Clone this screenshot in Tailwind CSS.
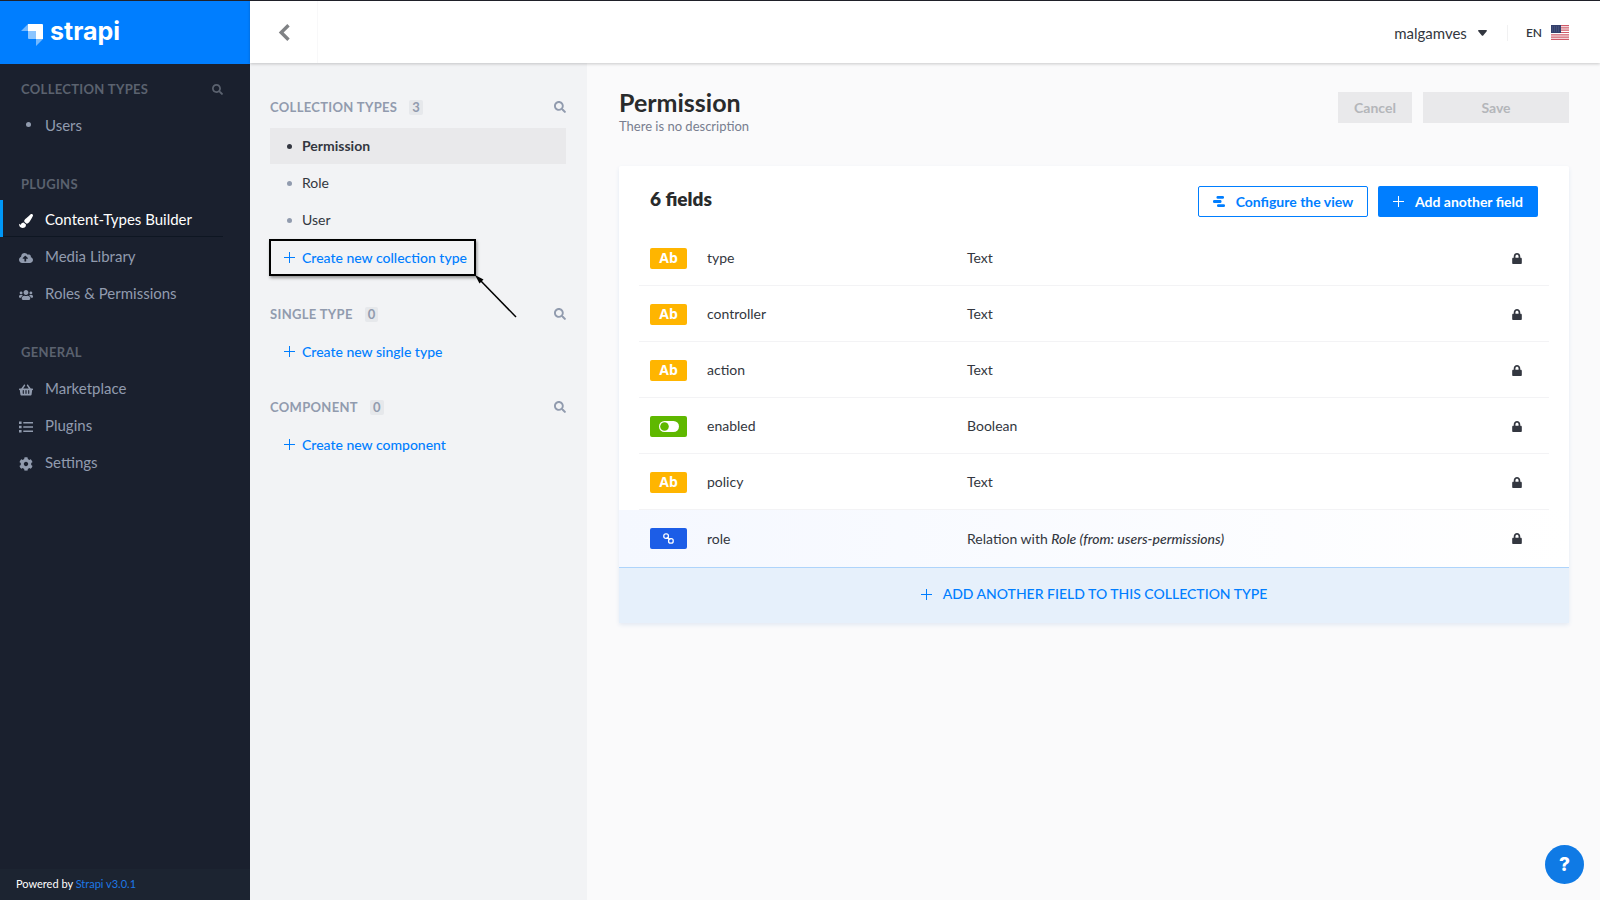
<!DOCTYPE html>
<html lang="en">
<head>
<meta charset="utf-8">
<title>Content-Types Builder</title>
<script src="https://cdn.jsdelivr.net/npm/@tailwindcss/browser@4"></script>
</head>
<body class="font-['Lato',sans-serif] text-[14px] leading-5 text-[#333740] bg-[#fafafb]">
<svg class="hidden">
  <symbol id="search" viewBox="0 0 512 512"><path d="M505 442.7L405.3 343c-4.5-4.5-10.6-7-17-7H372c27.6-35.3 44-79.7 44-128C416 93.1 322.9 0 208 0S0 93.1 0 208s93.1 208 208 208c48.3 0 92.7-16.4 128-44v16.3c0 6.4 2.5 12.5 7 17l99.7 99.7c9.4 9.4 24.6 9.4 33.9 0l28.3-28.3c9.4-9.4 9.4-24.6.1-34zM208 336c-70.7 0-128-57.2-128-128 0-70.7 57.2-128 128-128 70.7 0 128 57.2 128 128 0 70.7-57.2 128-128 128z"/></symbol>
  <symbol id="lock" viewBox="0 0 448 512"><path d="M400 224h-24v-72C376 68.2 307.8 0 224 0S72 68.2 72 152v72H48c-26.5 0-48 21.5-48 48v192c0 26.5 21.5 48 48 48h352c26.500 0 48-21.500 48-48V272c0-26.500-21.500-48-48-48zm-104 0H152v-72c0-39.700 32.300-72 72-72s72 32.300 72 72v72z"/></symbol>
  <symbol id="plus" viewBox="0 0 11 11"><path d="M5.500 0v11M0 5.500h11" stroke="currentColor" fill="none"/></symbol>
</svg>
<div class="flex min-h-screen flex-col border-t border-[#20222b]">
<div class="flex flex-1">

  <aside class="flex w-[250px] shrink-0 flex-col bg-[#1a202e] text-[#919bae]">
    <a href="#" class="flex h-[63px] items-center gap-[7px] bg-[#007eff] pl-[21px] text-white" aria-label="strapi">
      <svg class="mt-1 h-[22px] w-[22px]" viewBox="0 0 22 22" fill="#fff"><path d="M7 0h14a1 1 0 0 1 1 1v14h-7V8a1 1 0 0 0-1-1H7z"/><path d="M7 0v7H0zM15 22v-7h7z" opacity=".45"/><path d="M7 7h7a1 1 0 0 1 1 1v7H8a1 1 0 0 1-1-1z" opacity=".55"/></svg>
      <span class="pb-[3px] font-['Inter',sans-serif] text-[25px] leading-8 font-bold">strapi</span>
    </a>
    <nav class="flex flex-1 flex-col pt-[15px] text-[15px]">
      <div class="flex h-5 items-center justify-between pl-[21px] pr-[27px]">
        <h2 class="text-[13px] font-bold tracking-wide text-[#5b626f]">COLLECTION TYPES</h2>
        <button aria-label="Search collection types"><svg class="size-[11px] fill-[#5b626f]"><use href="#search"/></svg></button>
      </div>
      <a href="#" class="mt-[7px] flex h-[37px] items-center gap-[14px] pl-[26px]"><i class="block size-[5px] rounded-full bg-[#919bae]"></i>Users</a>
      <h2 class="mt-[31px] h-5 pl-[21px] text-[13px] leading-5 font-bold tracking-wide text-[#5b626f]">PLUGINS</h2>
      <div class="mt-[6px]">
        <a href="#" class="relative flex h-[37px] items-center gap-3 border-l-[3px] border-[#0097f7] pl-[16px] text-white after:absolute after:bottom-0 after:left-0 after:right-[27px] after:h-px after:bg-[#0e1622]">
          <svg class="mt-1 size-[14px]" viewBox="0 0 512 512" fill="currentColor"><path d="M167.020 309.340c-40.120 2.580-76.530 17.860-97.190 72.300-2.350 6.210-8 9.980-14.590 9.980-11.110 0-45.460-27.670-55.250-34.350C0 439.620 37.930 512 128 512c75.860 0 128-43.770 128-120.190 0-3.110-.65-6.080-.97-9.130l-88.010-73.340zM457.890 0c-15.160 0-29.370 6.710-40.210 16.450C213.270 199.050 192 203.340 192 257.090c0 13.700 3.250 26.760 8.730 38.700l63.820 53.180c7.210 1.800 14.640 3.030 22.390 3.030 62.110 0 98.110-45.470 211.160-256.460 7.380-14.350 13.900-29.850 13.900-45.990C512 20.640 486 0 457.890 0z"/></svg>Content-Types Builder</a>
        <a href="#" class="flex h-[37px] items-center gap-3 pl-[19px]">
          <svg class="mt-1 h-[14px] w-[14px]" viewBox="0 0 640 512" fill="currentColor"><path d="M537.600 226.600c4.100-10.700 6.400-22.400 6.400-34.600 0-53-43-96-96-96-19.700 0-38.100 6-53.300 16.200C367 64.200 315.300 32 256 32c-88.400 0-160 71.600-160 160 0 2.700.1 5.400.2 8.100C40.200 219.800 0 273.200 0 336c0 79.500 64.500 144 144 144h368c70.700 0 128-57.300 128-128 0-61.900-44-113.600-102.400-125.400zM393.400 288H328v112c0 8.800-7.200 16-16 16h-48c-8.800 0-16-7.200-16-16V288h-65.400c-14.300 0-21.400-17.200-11.300-27.300l105.400-105.400c6.200-6.200 16.400-6.200 22.600 0l105.400 105.400c10.100 10.100 2.900 27.300-11.300 27.300z"/></svg>Media Library</a>
        <a href="#" class="flex h-[37px] items-center gap-3 pl-[19px]">
          <svg class="mt-1 h-[14px] w-[14px]" viewBox="0 0 640 512" fill="currentColor"><path d="M96 224c35.300 0 64-28.700 64-64s-28.700-64-64-64-64 28.700-64 64 28.700 64 64 64zm448 0c35.300 0 64-28.700 64-64s-28.700-64-64-64-64 28.700-64 64 28.700 64 64 64zm32 32h-64c-17.600 0-33.500 7.100-45.100 18.600 40.300 22.100 68.900 62 75.100 109.400h66c17.700 0 32-14.300 32-32v-32c0-35.300-28.700-64-64-64zm-256 0c61.900 0 112-50.100 112-112S381.900 32 320 32 208 82.100 208 144s50.100 112 112 112zm76.800 32h-8.300c-20.800 10-43.900 16-68.500 16s-47.600-6-68.500-16h-8.300C179.600 288 128 339.600 128 403.200V432c0 26.500 21.500 48 48 48h288c26.500 0 48-21.500 48-48v-28.800c0-63.600-51.600-115.200-115.200-115.200zm-223.700-13.400C161.500 263.100 145.600 256 128 256H64c-35.300 0-64 28.700-64 64v32c0 17.700 14.300 32 32 32h65.900c6.300-47.400 34.900-87.300 75.200-109.400z"/></svg>Roles &amp; Permissions</a>
      </div>
      <h2 class="mt-[31px] h-5 pl-[21px] text-[13px] leading-5 font-bold tracking-wide text-[#5b626f]">GENERAL</h2>
      <div class="mt-[7px]">
        <a href="#" class="flex h-[37px] items-center gap-3 pl-[19px]">
          <svg class="mt-1 h-[14px] w-[14px]" viewBox="0 0 576 512" fill="currentColor"><path d="M576 216v16c0 13.255-10.745 24-24 24h-8l-26.113 182.788C514.509 462.435 494.257 480 470.370 480H105.630c-23.887 0-44.139-17.565-47.518-41.212L32 256h-8c-13.255 0-24-10.745-24-24v-16c0-13.255 10.745-24 24-24h67.341l106.780-146.821c10.395-14.292 30.407-17.453 44.701-7.058 14.293 10.395 17.453 30.408 7.058 44.701L170.477 192h235.046L326.120 82.821c-10.395-14.292-7.234-34.306 7.059-44.701 14.291-10.395 34.306-7.235 44.701 7.058L484.659 192H552c13.255 0 24 10.745 24 24zM312 392V280c0-13.255-10.745-24-24-24s-24 10.745-24 24v112c0 13.255 10.745 24 24 24s24-10.745 24-24zm112 0V280c0-13.255-10.745-24-24-24s-24 10.745-24 24v112c0 13.255 10.745 24 24 24s24-10.745 24-24zm-224 0V280c0-13.255-10.745-24-24-24s-24 10.745-24 24v112c0 13.255 10.745 24 24 24s24-10.745 24-24z"/></svg>Marketplace</a>
        <a href="#" class="flex h-[37px] items-center gap-3 pl-[19px]">
          <svg class="mt-1 h-[14px] w-[14px]" viewBox="0 0 14 14" fill="currentColor"><path d="M0 1.500h2.600v2.600H0zM0 5.700h2.600v2.600H0zM0 9.900h2.600v2.600H0zM4.300 2.100H14v1.400H4.300zM4.300 6.300H14v1.400H4.300zM4.300 10.500H14v1.400H4.300z"/></svg>Plugins</a>
        <a href="#" class="flex h-[37px] items-center gap-3 pl-[19px]">
          <svg class="mt-1 size-[14px]" viewBox="0 0 512 512" fill="currentColor"><path d="M487.400 315.700l-42.600-24.600c4.300-23.200 4.300-47 0-70.200l42.600-24.600c4.900-2.800 7.100-8.600 5.500-14-11.100-35.600-30-67.800-54.700-94.600-3.800-4.100-10-5.100-14.800-2.300L380.800 110c-17.900-15.400-38.500-27.300-60.800-35.100V25.800c0-5.600-3.900-10.500-9.400-11.700-36.700-8.200-74.300-7.800-109.200 0-5.500 1.200-9.400 6.100-9.400 11.700V75c-22.200 7.900-42.800 19.800-60.800 35.100L88.700 85.500c-4.900-2.800-11-1.900-14.800 2.300-24.700 26.700-43.600 58.900-54.700 94.600-1.700 5.400.6 11.200 5.500 14L67.300 221c-4.300 23.200-4.300 47 0 70.200l-42.600 24.600c-4.900 2.800-7.100 8.600-5.500 14 11.100 35.600 30 67.800 54.700 94.600 3.800 4.100 10 5.100 14.800 2.300l42.600-24.600c17.900 15.400 38.500 27.300 60.800 35.100v49.200c0 5.600 3.900 10.500 9.400 11.700 36.700 8.200 74.300 7.800 109.200 0 5.500-1.200 9.400-6.100 9.400-11.700v-49.200c22.200-7.900 42.800-19.800 60.800-35.100l42.600 24.600c4.900 2.800 11 1.900 14.800-2.300 24.700-26.700 43.600-58.900 54.700-94.600 1.500-5.500-.7-11.300-5.600-14.100zM256 336c-44.100 0-80-35.900-80-80s35.900-80 80-80 80 35.900 80 80-35.900 80-80 80z"/></svg>Settings</a>
      </div>
    </nav>
    <footer class="bg-[#1c2431] pt-[5px] pb-[6px] pl-4 text-[11px] text-white">Powered by <a href="#" class="text-[#1c78e6]">Strapi v3.0.1</a></footer>
  </aside>

  <div class="flex min-w-0 flex-1 flex-col">
    <header class="z-10 flex h-[62px] items-center justify-between bg-white pr-[31px] shadow-[0_1px_3px_rgba(0,0,0,0.2)]">
      <button aria-label="Back" class="flex h-full w-[68px] items-center justify-center border-r border-[#f8f8f9]"><svg class="h-[17px] w-[12px]" viewBox="0 0 12 17" fill="none" stroke="#808285" stroke-width="3.400"><path d="M10.500 1.300L3.200 8.500l7.300 7.200"/></svg></button>
      <div class="flex items-center pt-px">
        <button class="flex items-center gap-[11px] text-[15px]">malgamves<svg class="h-[6px] w-[9px]" viewBox="0 0 9 6"><path d="M.8 0h7.400c.7 0 1 .7.500 1.200L5.200 5.500c-.4.400-1 .4-1.400 0L.3 1.200C-.2.700.1 0 .8 0z" fill="#333740"/></svg></button>
        <span class="ml-5 h-4 w-px bg-[#f1f1f2]"></span>
        <button class="ml-[18px] flex items-center gap-[9px] text-[12px] font-semibold">EN
          <svg class="h-[15px] w-[18px]" viewBox="0 0 18 15"><path fill="#fff" d="M0 0h18v15H0z"/><path d="M0 .6h18M0 2.900h18M0 5.200h18M0 7.500h18M0 9.800h18M0 12.100h18M0 14.400h18" stroke="#cf5a68" stroke-width="1.200"/><path fill="#34406c" d="M0 0h10v8H0z"/><path d="M1 2h8M1 4h8M1 6h8" stroke="#7480a0" stroke-width=".5" stroke-dasharray="1 1"/></svg></button>
      </div>
    </header>

    <div class="flex flex-1">
      <section class="w-[337px] shrink-0 bg-[#f2f3f5] pt-[34px] pr-[21px] pl-5" aria-label="Content types">
        <div class="flex h-5 items-center justify-between text-[#919bae]">
          <div class="flex items-center gap-3"><h2 class="text-[13px] font-bold tracking-wide">COLLECTION TYPES</h2><span class="h-[15px] rounded-xs bg-[#e6e8eb] px-[3px] text-[13px] leading-[15px] font-bold">3</span></div>
          <button aria-label="Search collection types"><svg class="size-[12px] fill-current"><use href="#search"/></svg></button>
        </div>
        <div class="mt-[11px] flex flex-col gap-px">
          <a href="#" class="flex h-9 items-center gap-[10px] bg-[#e9e9eb] pl-[17px] font-bold"><i class="block size-[5px] rounded-full bg-[#333740]"></i>Permission</a>
          <a href="#" class="flex h-9 items-center gap-[10px] pl-[17px]"><i class="block size-[5px] rounded-full bg-[#919bae]"></i>Role</a>
          <a href="#" class="flex h-9 items-center gap-[10px] pl-[17px]"><i class="block size-[5px] rounded-full bg-[#919bae]"></i>User</a>
          <div class="relative">
            <button class="flex h-[37px] items-center gap-[7px] pl-[14px] font-medium text-[#007eff]"><svg class="size-[11px]"><use href="#plus"/></svg>Create new collection type</button>
            <div class="pointer-events-none absolute top-0 -left-px h-[37px] w-[207px] border-2 border-black shadow-[1px_2px_3px_rgba(0,0,0,0.4)]"></div>
            <svg class="pointer-events-none absolute top-[36px] left-[205px] h-[44px] w-[42px]" viewBox="0 0 42 44"><path d="M4 4l37 38" stroke="#000" stroke-width="1.500"/><path d="M0 0l8.500 4.500-4 4z"/></svg>
          </div>
        </div>
        <div class="mt-[28px] flex h-5 items-center justify-between text-[#919bae]">
          <div class="flex items-center gap-3"><h2 class="text-[13px] font-bold tracking-wide">SINGLE TYPE</h2><span class="h-[15px] rounded-xs bg-[#e6e8eb] px-[3px] text-[13px] leading-[15px] font-bold">0</span></div>
          <button aria-label="Search single types"><svg class="size-[12px] fill-current"><use href="#search"/></svg></button>
        </div>
        <button class="mt-[9px] flex h-[37px] items-center gap-[7px] pl-[14px] font-medium text-[#007eff]"><svg class="size-[11px]"><use href="#plus"/></svg>Create new single type</button>
        <div class="mt-[27px] flex h-5 items-center justify-between text-[#919bae]">
          <div class="flex items-center gap-3"><h2 class="text-[13px] font-bold tracking-wide">COMPONENT</h2><span class="h-[15px] rounded-xs bg-[#e6e8eb] px-[3px] text-[13px] leading-[15px] font-bold">0</span></div>
          <button aria-label="Search components"><svg class="size-[12px] fill-current"><use href="#search"/></svg></button>
        </div>
        <button class="mt-[9px] flex h-[37px] items-center gap-[7px] pl-[14px] font-medium text-[#007eff]"><svg class="size-[11px]"><use href="#plus"/></svg>Create new component</button>
      </section>

      <main class="min-w-0 flex-1 bg-[#fafafb] pt-[23px] pr-[31px] pl-8">
        <div class="flex items-start justify-between">
          <div>
            <h1 class="text-[25px] leading-8 font-bold text-[#292b2c]">Permission</h1>
            <p class="text-[13px] leading-4 text-[#787e8f]">There is no description</p>
          </div>
          <div class="mt-[6px] flex gap-[11px] font-bold text-[#b4b6ba]">
            <button disabled class="h-[31px] w-[74px] bg-[#e9e9eb]">Cancel</button>
            <button disabled class="h-[31px] w-[146px] bg-[#e9e9eb]">Save</button>
          </div>
        </div>

        <div class="mt-8 rounded-xs bg-white shadow-[0_2px_4px_#e3e9f3]">
          <div class="flex h-16 items-start justify-between pt-5 pr-[31px] pl-[31px]">
            <h2 class="text-[19px] leading-[26px] font-extrabold text-[#292b2c]">6 fields</h2>
            <div class="flex gap-[10px] font-bold">
              <button class="flex h-[31px] w-[170px] items-center justify-center gap-[11px] rounded-xs border border-[#007eff] text-[#007eff]"><svg class="h-[11px] w-[12px]" viewBox="0 0 12 11" fill="currentColor"><rect x="3.500" y="0" width="7.500" height="2.800" rx="1.200"/><rect x="0" y="4.100" width="8.500" height="2.800" rx="1.200"/><rect x="4" y="8.200" width="8" height="2.800" rx="1.200"/></svg>Configure the view</button>
              <button class="flex h-[31px] w-[160px] items-center justify-center gap-[11px] rounded-xs bg-[#007eff] text-white"><svg class="size-[11px]"><use href="#plus"/></svg>Add another field</button>
            </div>
          </div>
          <table class="w-full table-fixed border-collapse text-left">
            <colgroup><col class="w-[88px]"><col class="w-[260px]"><col><col class="w-[57px]"></colgroup>
            <tbody>
              <tr class="h-14 bg-[linear-gradient(#f3f3f5,#f3f3f5)] bg-[length:calc(100%-40px)_1px] bg-[position:center_bottom] bg-no-repeat"><td class="pl-[31px]"><span class="flex h-[21px] w-[37px] items-center justify-center rounded-xs bg-[#ffb500] font-['Open_Sans',sans-serif] font-bold text-white">Ab</span></td><td>type</td><td>Text</td><td><svg class="h-[11px] w-[10px] fill-[#333740]" role="img" aria-label="Locked"><use href="#lock"/></svg></td></tr>
              <tr class="h-14 bg-[linear-gradient(#f3f3f5,#f3f3f5)] bg-[length:calc(100%-40px)_1px] bg-[position:center_bottom] bg-no-repeat"><td class="pl-[31px]"><span class="flex h-[21px] w-[37px] items-center justify-center rounded-xs bg-[#ffb500] font-['Open_Sans',sans-serif] font-bold text-white">Ab</span></td><td>controller</td><td>Text</td><td><svg class="h-[11px] w-[10px] fill-[#333740]" role="img" aria-label="Locked"><use href="#lock"/></svg></td></tr>
              <tr class="h-14 bg-[linear-gradient(#f3f3f5,#f3f3f5)] bg-[length:calc(100%-40px)_1px] bg-[position:center_bottom] bg-no-repeat"><td class="pl-[31px]"><span class="flex h-[21px] w-[37px] items-center justify-center rounded-xs bg-[#ffb500] font-['Open_Sans',sans-serif] font-bold text-white">Ab</span></td><td>action</td><td>Text</td><td><svg class="h-[11px] w-[10px] fill-[#333740]" role="img" aria-label="Locked"><use href="#lock"/></svg></td></tr>
              <tr class="h-14 bg-[linear-gradient(#f3f3f5,#f3f3f5)] bg-[length:calc(100%-40px)_1px] bg-[position:center_bottom] bg-no-repeat"><td class="pl-[31px]"><span class="flex h-[21px] w-[37px] items-center justify-center rounded-xs bg-[#5fb800]"><svg class="h-[11px] w-[20px]" viewBox="0 0 20 11"><rect width="20" height="11" rx="5.500" fill="#fff"/><circle cx="5.500" cy="5.500" r="4.300" fill="#5fb800"/></svg></span></td><td>enabled</td><td>Boolean</td><td><svg class="h-[11px] w-[10px] fill-[#333740]" role="img" aria-label="Locked"><use href="#lock"/></svg></td></tr>
              <tr class="h-14 bg-[linear-gradient(#f3f3f5,#f3f3f5)] bg-[length:calc(100%-40px)_1px] bg-[position:center_bottom] bg-no-repeat"><td class="pl-[31px]"><span class="flex h-[21px] w-[37px] items-center justify-center rounded-xs bg-[#ffb500] font-['Open_Sans',sans-serif] font-bold text-white">Ab</span></td><td>policy</td><td>Text</td><td><svg class="h-[11px] w-[10px] fill-[#333740]" role="img" aria-label="Locked"><use href="#lock"/></svg></td></tr>
              <tr class="h-[57px] bg-linear-to-r from-[#f5f8ff] to-white"><td class="pl-[31px]"><span class="flex h-[21px] w-[37px] items-center justify-center rounded-xs bg-[#1c5de7]"><svg class="size-[11px]" viewBox="0 0 11 11" fill="none" stroke="#fff" stroke-width="1.300"><rect x=".8" y=".8" width="4.600" height="4.600" rx="2"/><rect x="5.600" y="5.600" width="4.600" height="4.600" rx="2"/><path d="M3.800 4.200l3.400 2.600"/></svg></span></td><td>role</td><td>Relation with <em class="font-medium">Role (from: users-permissions)</em></td><td><svg class="h-[11px] w-[10px] fill-[#333740]" role="img" aria-label="Locked"><use href="#lock"/></svg></td></tr>
            </tbody>
          </table>
          <button class="flex h-14 w-full items-center justify-center gap-[11px] border-t border-[#aed4fb] bg-[#e6f0fb] pb-[3px] font-medium text-[#007eff]"><svg class="size-[11px]"><use href="#plus"/></svg>ADD ANOTHER FIELD TO THIS COLLECTION TYPE</button>
        </div>
      </main>
    </div>
  </div>
</div>
</div>
<button aria-label="Help" class="fixed right-4 bottom-4 z-20 flex size-[39px] items-center justify-center rounded-full bg-[#0f7ae5] font-['Inter',sans-serif] text-[19px] font-extrabold text-white">?</button>
</body>
</html>
